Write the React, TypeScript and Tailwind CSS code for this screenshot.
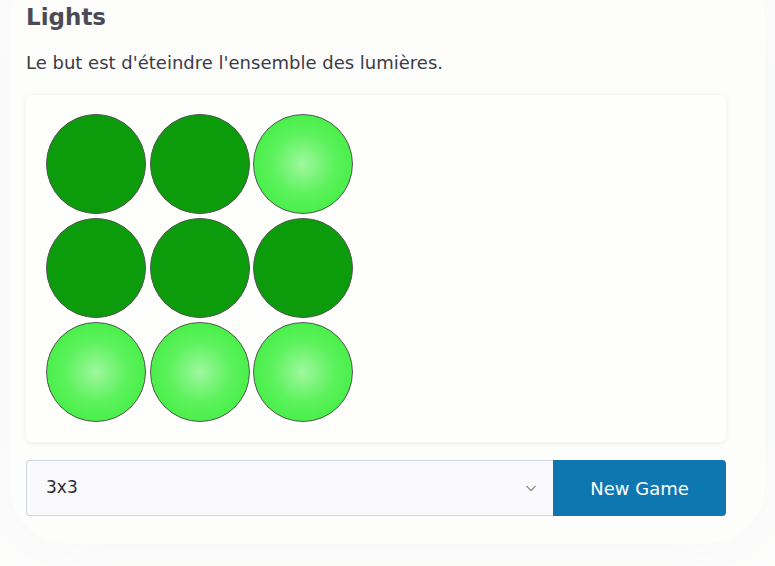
import { useState } from "react";

const SIZES = ["3x3", "4x4", "5x5"];

const INITIAL = [
  [false, false, true],
  [false, false, false],
  [true, true, true],
];

function Light({ on, onClick }: { on: boolean; onClick: () => void }) {
  return (
    <button
      onClick={onClick}
      className={`w-[100px] h-[100px] rounded-full border border-[#555555] ${
        on
          ? "bg-[radial-gradient(circle_at_center,#9ef89e_0%,#5cf25c_45%,#36ec36_100%)]"
          : "bg-[#0b9b0b]"
      }`}
    />
  );
}

export default function App() {
  const [size, setSize] = useState("3x3");
  const [grid, setGrid] = useState(INITIAL);

  const toggle = (r: number, c: number) => {
    const n = grid.length;
    const next = grid.map((row) => [...row]);
    const flip = (y: number, x: number) => {
      if (y >= 0 && y < n && x >= 0 && x < n) next[y][x] = !next[y][x];
    };
    flip(r, c);
    flip(r - 1, c);
    flip(r + 1, c);
    flip(r, c - 1);
    flip(r, c + 1);
    setGrid(next);
  };

  const newGame = () => {
    const n = parseInt(size, 10);
    setGrid(
      Array.from({ length: n }, () =>
        Array.from({ length: n }, () => Math.random() < 0.5),
      ),
    );
  };

  return (
    <div className="min-h-[566px] bg-[#fdfdfc] font-['DejaVu_Sans',sans-serif] overflow-hidden">
      <div className="mx-[10px] -mt-[40px] pt-[40px] pb-[28px] rounded-[60px] bg-[#fdfdfc] shadow-[0_0_80px_rgba(120,130,170,0.06)]">
        <div className="px-4">
          <h1 className="pt-[4px] text-[23px] leading-[26px] font-bold text-[#4b4b55]">Lights</h1>
          <p className="mt-[22px] text-[18px] leading-[22px] text-[#3b3b45]">
            Le but est d'éteindre l'ensemble des lumières.
          </p>

          <div className="mt-[21px] w-[700px] bg-[#fefefd] rounded-[5px] shadow-[0_1px_5px_rgba(60,70,100,0.1)] pt-[19px] pb-[20px] px-5">
            <div className="flex flex-col gap-1">
              {grid.map((row, r) => (
                <div key={r} className="flex gap-[3.5px]">
                  {row.map((on, c) => (
                    <Light key={c} on={on} onClick={() => toggle(r, c)} />
                  ))}
                </div>
              ))}
            </div>
          </div>

          <div className="mt-[18px] w-[700px] flex h-[56px]">
            <div className="relative flex-1">
              <select
                value={size}
                onChange={(e) => setSize(e.target.value)}
                className="appearance-none w-full h-full bg-[#fafafc] border border-r-0 border-[#cfd4e2] rounded-l-[4px] pl-[19px] text-[17px] text-[#2a2a33] outline-none"
              >
                {SIZES.map((s) => (
                  <option key={s} value={s}>
                    {s}
                  </option>
                ))}
              </select>
              <svg
                className="absolute right-[16px] top-1/2 -translate-y-1/2 pointer-events-none"
                width="12"
                height="8"
                viewBox="0 0 12 8"
                fill="none"
              >
                <path d="M1.5 2l4.5 4.5L10.5 2" stroke="#8a90a0" strokeWidth="1.3" />
              </svg>
            </div>
            <button
              onClick={newGame}
              className="w-[173px] h-full bg-[#0e77b0] text-white text-[18px] rounded-r-[4px]"
            >
              New Game
            </button>
          </div>
        </div>
      </div>
    </div>
  );
}
